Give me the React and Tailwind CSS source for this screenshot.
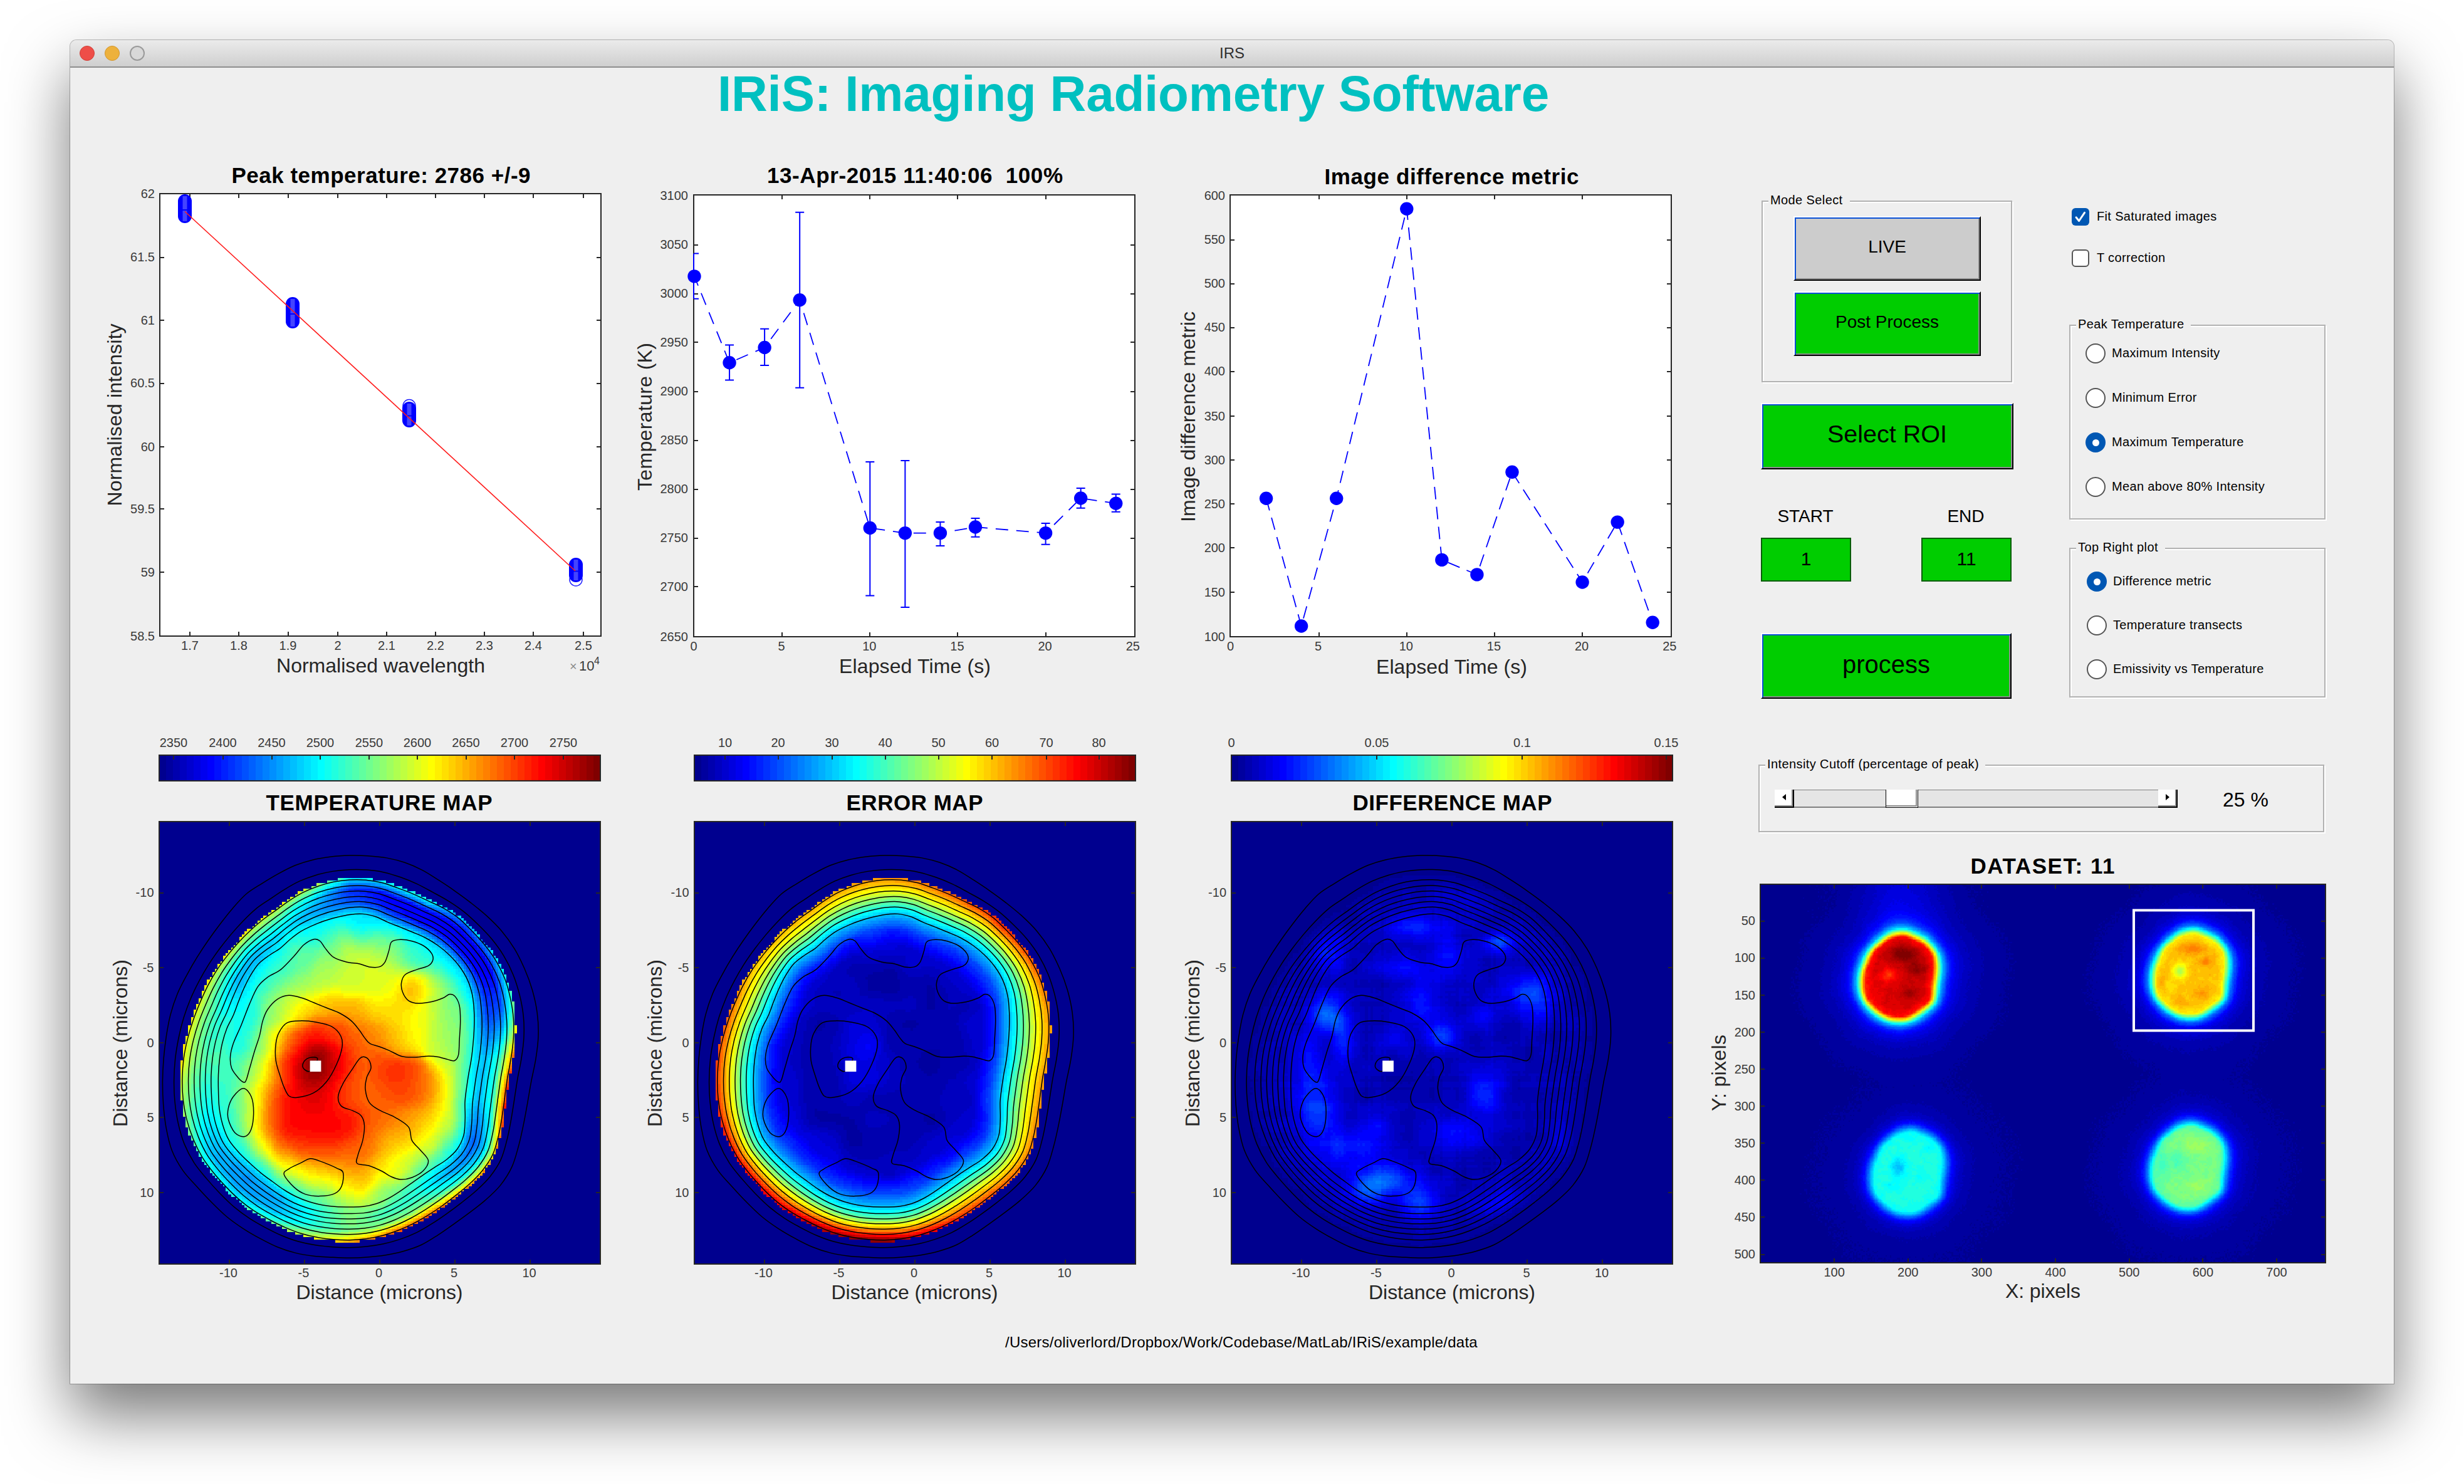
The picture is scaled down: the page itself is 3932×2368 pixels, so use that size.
import React from "react";

/* ---------- numeric helpers ---------- */

const clamp = (v, a, b) => Math.max(a, Math.min(b, v));
const smooth = (a, b, v) => {
  const t = clamp((v - a) / (b - a), 0, 1);
  return t * t * (3 - 2 * t);
};

// The 64 step "jet" colour map.
const JET = Array.from({ length: 64 }, (_, i) => {
  const v = (i + 1) / 64;
  const ch = (c) => Math.round(255 * clamp(1.5 - Math.abs(4 * v - c), 0, 1));
  return `rgb(${ch(3)},${ch(2)},${ch(1)})`;
});

const hash = (x, y) => {
  const s = Math.sin(x * 127.1 + y * 311.7) * 43758.5453;
  return s - Math.floor(s);
};
const valueNoise = (x, y) => {
  const xi = Math.floor(x);
  const yi = Math.floor(y);
  const fx = smooth(0, 1, x - xi);
  const fy = smooth(0, 1, y - yi);
  const a = hash(xi, yi) * (1 - fx) + hash(xi + 1, yi) * fx;
  const b = hash(xi, yi + 1) * (1 - fx) + hash(xi + 1, yi + 1) * fx;
  return a * (1 - fy) + b * fy - 0.5;
};

/* ---------- sample geometry ---------- */

const CX = 760;
const CY = 890;

const OUTER = [[790,355],[870,360],[960,383],[1040,425],[1110,467],[1180,515],[1245,575],[1290,645],[1320,715],[1337,800],[1330,880],[1310,960],[1295,1040],[1275,1120],[1255,1180],[1210,1235],[1140,1285],[1060,1335],[970,1385],[900,1402],[800,1413],[700,1412],[600,1403],[550,1390],[470,1355],[390,1310],[310,1240],[250,1185],[215,1130],[198,1060],[190,980],[192,900],[203,820],[222,745],[270,660],[320,590],[390,510],[430,465],[510,420],[600,378],[700,358]];
const EDGE = [[790,418],[850,424],[920,445],[1000,475],[1080,510],[1140,560],[1195,615],[1235,680],[1255,750],[1262,810],[1255,870],[1238,950],[1228,1020],[1215,1090],[1195,1150],[1150,1200],[1090,1245],[1020,1290],[940,1330],[860,1356],[780,1367],[700,1365],[610,1350],[530,1320],[450,1280],[370,1215],[310,1150],[275,1085],[255,1020],[249,950],[255,880],[275,810],[305,740],[345,670],[400,605],[460,550],[540,497],[610,455],[700,426]];
const INNER = [[790,507],[840,515],[880,533],[940,553],[1000,575],[1050,605],[1090,640],[1120,680],[1137,730],[1140,790],[1135,860],[1120,940],[1110,1000],[1112,1060],[1105,1110],[1065,1150],[1000,1185],[940,1222],[870,1262],[820,1278],[760,1280],[680,1276],[600,1255],[520,1210],[450,1160],[390,1105],[365,1040],[360,970],[365,880],[380,820],[410,770],[440,700],[480,640],[550,600],[600,560],[650,538],[720,518]];

// Radius of a closed outline for every whole degree around the centre.
function radialTable(points) {
  const polar = points
    .map(([x, y]) => [((Math.atan2(y - CY, x - CX) * 180) / Math.PI + 360) % 360, Math.hypot(x - CX, y - CY)])
    .sort((a, b) => a[0] - b[0]);
  const n = polar.length;
  const raw = Array.from({ length: 360 }, (_, d) => {
    let j = polar.findIndex((p) => p[0] > d);
    if (j < 0) j = 0;
    const b = polar[j];
    const a = polar[(j - 1 + n) % n];
    const span = (b[0] - a[0] + 360) % 360 || 360;
    const t = ((d - a[0] + 360) % 360) / span;
    return a[1] * (1 - t) + b[1] * t;
  });
  return raw.map((_, d) => {
    let s = 0;
    for (let k = -3; k <= 3; k++) s += raw[(d + k + 360) % 360];
    return s / 7;
  });
}
const R_OUT = radialTable(OUTER);
const R_EDGE = radialTable(EDGE);
const R_IN = radialTable(INNER);
const at = (table, deg) => {
  const n = table.length;
  const p = (deg / 360) * n;
  const i = Math.floor(p);
  const f = p - i;
  return table[i % n] * (1 - f) + table[(i + 1) % n] * f;
};

// v < 1 inside the plateau, 1..2 across the steep rim, > 2 outside it.
function rimCoord(x, y) {
  const deg = ((Math.atan2(y - CY, x - CX) * 180) / Math.PI + 360) % 360;
  const r = Math.hypot(x - CX, y - CY);
  const ri = at(R_IN, deg);
  const re = at(R_EDGE, deg);
  return { deg, v: r < ri ? r / ri : 1 + (r - ri) / (re - ri) };
}

function closedCurve(pts) {
  const n = pts.length;
  let d = `M${pts[0][0].toFixed(1)} ${pts[0][1].toFixed(1)}`;
  for (let i = 0; i < n; i++) {
    const p0 = pts[(i - 1 + n) % n];
    const p1 = pts[i];
    const p2 = pts[(i + 1) % n];
    const p3 = pts[(i + 2) % n];
    const c = [p1[0] + (p2[0] - p0[0]) / 6, p1[1] + (p2[1] - p0[1]) / 6, p2[0] - (p3[0] - p1[0]) / 6, p2[1] - (p3[1] - p1[1]) / 6, p2[0], p2[1]];
    d += `C${c.map((q) => q.toFixed(1)).join(" ")}`;
  }
  return d + "Z";
}

const ring = (fn) =>
  closedCurve(
    Array.from({ length: 60 }, (_, i) => {
      const deg = i * 6;
      const r = fn(deg);
      const a = (deg * Math.PI) / 180;
      return [CX + r * Math.cos(a), CY + r * Math.sin(a)];
    })
  );

const CONTOURS = [
  ring((d) => R_OUT[d]),
  ring((d) => R_OUT[d] * 0.42 + R_EDGE[d] * 0.58),
  ...[0, 0.17, 0.33, 0.49, 0.64, 0.8, 1].map((f) => ring((d) => R_EDGE[d] * (1 - f) + R_IN[d] * f)),
  ...[
    [[651,575],[670,580],[685,598],[710,622],[750,635],[790,640],[820,648],[850,648],[868,635],[880,605],[888,582],[915,576],[950,580],[985,592],[1010,612],[1014,630],[1000,645],[965,655],[930,668],[918,690],[922,715],[940,737],[970,744],[1010,740],[1045,730],[1065,720],[1082,726],[1095,750],[1098,790],[1095,840],[1092,880],[1080,895],[1060,892],[1030,885],[1000,883],[960,886],[920,884],[880,868],[850,858],[822,850],[806,835],[790,815],[765,790],[730,770],[690,756],[650,742],[615,730],[575,723],[540,733],[510,760],[495,790],[485,830],[470,870],[455,915],[445,945],[437,952],[420,940],[400,915],[396,885],[405,850],[430,800],[455,745],[480,700],[510,675],[550,655],[590,620],[620,590]],
    [[535,850],[545,820],[570,795],[610,790],[660,794],[705,805],[733,830],[737,860],[720,905],[690,950],[650,980],[600,992],[575,988],[560,965],[548,935],[535,895]],
    [[640,922],[622,918],[617,905],[630,890],[650,886],[662,892]],
    [[805,885],[820,895],[825,915],[812,940],[808,970],[820,1005],[850,1025],[900,1045],[940,1070],[950,1105],[975,1130],[1000,1158],[985,1185],[950,1203],[915,1208],[885,1200],[860,1187],[820,1172],[783,1166],[785,1145],[800,1105],[805,1065],[795,1040],[770,1027],[735,1015],[725,990],[740,955],[770,915],[790,890]],
    [[436,968],[460,990],[467,1030],[460,1075],[440,1095],[410,1085],[390,1050],[390,1020],[405,990]],
    [[640,1153],[670,1160],[720,1178],[740,1190],[736,1225],[715,1245],[670,1252],[625,1247],[590,1228],[560,1195],[575,1180],[610,1165]],
  ].map(closedCurve),
];

/* ---------- fields ---------- */

const T_POINTS = [[790,550,.36],[700,570,.42],[850,590,.42],[650,560,.38],[760,600,.56],[820,620,.58],[700,620,.52],[620,620,.46],[560,650,.42],[500,690,.4],[960,590,.4],[1000,620,.4],[900,620,.5],[950,620,.42],[1050,650,.4],[1090,700,.42],[850,630,.6],[900,680,.6],[840,700,.58],[760,680,.57],[680,680,.54],[600,700,.52],[540,730,.5],[950,705,.71],[1000,700,.6],[1040,720,.52],[1080,780,.48],[460,780,.38],[520,780,.5],[570,760,.6],[620,760,.65],[700,750,.68],[780,770,.69],[850,760,.65],[920,770,.64],[980,780,.6],[1040,800,.54],[1080,850,.5],[430,850,.38],[490,850,.5],[540,840,.66],[590,850,.81],[650,830,.84],[720,820,.81],[780,830,.78],[840,830,.73],[900,840,.68],[960,830,.62],[1030,870,.56],[400,920,.42],[450,920,.5],[500,920,.6],[550,920,.8],[600,910,.9],[655,890,1.02],[655,930,.99],[700,900,.93],[740,900,.85],[800,900,.77],[850,900,.8],[900,930,.84],[960,930,.8],[1010,950,.72],[1060,940,.6],[1100,930,.48],[390,1000,.42],[450,1000,.52],[490,990,.65],[530,1000,.82],[590,1000,.87],[650,980,.9],[700,980,.87],[750,980,.8],[800,980,.77],[860,980,.78],[920,970,.8],[980,980,.78],[1040,1000,.66],[1090,1000,.5],[400,1070,.42],[460,1070,.57],[510,1070,.76],[570,1070,.87],[640,1070,.87],[700,1080,.87],[760,1060,.86],[820,1060,.78],[880,1050,.76],[940,1060,.72],[1000,1050,.68],[1060,1060,.55],[430,1120,.42],[490,1130,.58],[550,1130,.77],[620,1130,.81],[690,1140,.8],[760,1140,.78],[820,1120,.76],[880,1110,.68],[940,1110,.66],[1000,1100,.6],[1060,1120,.46],[500,1180,.45],[560,1180,.58],[620,1190,.65],[680,1190,.66],[740,1190,.7],[800,1200,.72],[860,1180,.64],[920,1170,.58],[980,1160,.5],[600,1230,.46],[680,1240,.5],[740,1240,.58],[800,1240,.62],[860,1240,.5]];

// Rim temperature, one row per 15 degrees, columns at the knots below.
const RIM_KNOTS = [1, 1.35, 1.7, 2, 2.1];
const T_RIM = [
  [.36,.3,.42,.68,.88],[.4,.3,.4,.78,.95],[.3,.2,.32,.6,.86],[.37,.28,.38,.65,.85],[.42,.4,.48,.75,.88],[.5,.42,.5,.75,.85],
  [.5,.5,.48,.65,.75],[.41,.38,.4,.55,.65],[.35,.28,.3,.42,.55],[.33,.26,.27,.35,.45],[.37,.3,.3,.4,.45],[.4,.38,.43,.5,.58],
  [.45,.44,.5,.6,.7],[.4,.4,.48,.58,.7],[.31,.31,.42,.56,.7],[.31,.31,.42,.56,.7],[.38,.34,.42,.55,.74],[.34,.27,.34,.5,.67],
  [.34,.2,.16,.32,.45],[.31,.14,.11,.33,.45],[.32,.12,.11,.36,.45],[.28,.11,.09,.2,.45],[.28,.12,.09,.28,.45],[.33,.18,.2,.42,.56],
];
const T_RIM_COLS = RIM_KNOTS.map((_, k) => T_RIM.map((row) => row[k]));
const lerpKnots = (knots, vals, v) => {
  if (v <= knots[0]) return vals[0];
  for (let i = 1; i < knots.length; i++)
    if (v <= knots[i]) {
      const t = (v - knots[i - 1]) / (knots[i] - knots[i - 1]);
      return vals[i - 1] * (1 - t) + vals[i] * t;
    }
  return vals[vals.length - 1];
};

const EDGE_LIMIT = 2.05;

function temperature(x, y) {
  const { deg, v } = rimCoord(x, y);
  if (v > EDGE_LIMIT) return 0;
  const rim = lerpKnots(RIM_KNOTS, T_RIM_COLS.map((c) => at(c, deg)), v);
  const mix = smooth(0.86, 1.08, v);
  if (mix >= 1) return rim;
  let num = 0;
  let den = 1e-9;
  for (const [px, py, val] of T_POINTS) {
    const w = Math.exp(-((px - x) ** 2 + (py - y) ** 2) / 1700);
    num += w * val;
    den += w;
  }
  return (num / den) * (1 - mix) + rim * mix;
}

const E_EDGE = [.7,.72,.74,.78,.82,.9,.98,.97,.92,.87,.85,.82,.8,.75,.68,.68,.7,.7,.72,.74,.78,.83,.78,.72];

function errorField(x, y) {
  const { deg, v } = rimCoord(x, y);
  if (v > EDGE_LIMIT) return 0;
  const e = at(E_EDGE, deg);
  const base = lerpKnots([0, 0.6, 0.78, 0.9, 1, 1.35, 1.7, 2], [0.035, 0.04, 0.075, 0.17, 0.31, 0.46, 0.63 * (0.5 + e / 1.5), e], v);
  const g = 0.07 * Math.exp(-(((x - 690) / 80) ** 2) - ((y - 880) / 90) ** 2);
  return base + g + 0.035 * valueNoise(x / 60, y / 50) * (v < 0.9 ? 1 : 0);
}

const D_BLOBS = [[740,545,90,35,.1],[990,585,50,26,.14],[480,610,60,60,.08],[700,650,90,30,.08],[840,620,50,60,.08],[1100,730,55,55,.13],[1040,700,80,40,.06],[480,775,55,50,.17],[530,850,35,65,.1],[820,830,50,38,.13],[760,740,60,60,.08],[940,780,40,40,.07],[450,1020,65,90,.12],[950,985,55,60,.1],[860,1090,80,50,.09],[540,1130,110,45,.09],[650,1210,100,42,.15],[590,1245,70,35,.09],[760,1270,60,45,.12],[1010,1270,90,35,.08],[1190,1110,50,60,.05],[620,1080,70,50,.06],[900,460,60,40,.04],[680,840,50,40,.05],[420,900,50,80,.06]].map(([x, y, sx, sy, a]) => [(x - 195) * 1.0244 + 178, y, sx, sy, a]);

function difference(x, y) {
  const { v } = rimCoord(x, y);
  const inside = 1 - smooth(1.5, 2.4, v);
  let s = 0;
  for (const [bx, by, sx, sy, a] of D_BLOBS) s += a * Math.exp(-(((x - bx) / sx) ** 2) - ((y - by) / sy) ** 2);
  const n = valueNoise(x / 42, y / 38) * 0.035 + (hash(Math.round(x / 8), 3) - 0.5) * 0.012 + (hash(5, Math.round(y / 7)) - 0.5) * 0.012;
  return 0.01 + inside * (0.034 + s + n);
}

const SPOTS = [
  { x: 491, y: 644, peak: 0.895, mods: [[500,585,28,20,.09],[530,625,22,22,.07],[515,690,20,18,.05],[465,640,18,18,-.09],[430,670,30,50,-.02]] },
  { x: 1178, y: 636, peak: 0.665, mods: [[1180,570,28,14,.07],[1215,605,16,12,.06],[1152,630,16,20,-.14],[1205,690,16,16,.04],[1130,672,14,20,-.04],[1150,715,16,12,.03],[1105,660,12,24,.04]] },
  { x: 511, y: 1175, peak: 0.385, mods: [[487,1165,18,28,-.09],[510,1085,14,10,-.04],[540,1190,16,14,-.03],[555,1115,14,12,-.03],[470,1215,20,16,-.03]] },
  { x: 1173, y: 1160, peak: 0.475, mods: [[1145,1145,26,26,-.05],[1190,1105,30,20,.035],[1195,1215,26,20,.03],[1110,1165,16,50,-.04]] },
];
const KX = 0.203;
const KY = 0.279;
function dataset(x, y) {
  let s = 0.012;
  for (const p of SPOTS) {
    const { v } = rimCoord(CX + (x - p.x) / KX, CY + (y - p.y) / KY);
    if (v > 9) continue;
    const prof = lerpKnots([0.8, 1, 1.3, 1.6, 2, 2.6, 3.2, 4.2, 6, 9], [1, 0.94, 0.75, 0.54, 0.31, 0.15, 0.09, 0.045, 0.018, 0], v);
    let m = 0;
    if (v < 1.3) for (const [mx, my, sx, sy, a] of p.mods) m += a * Math.exp(-(((x - mx) / sx) ** 2) - ((y - my) / sy) ** 2);
    s += p.peak * prof + m * (1 - smooth(1, 1.3, v));
    if (v < 1) s += valueNoise(x / 9, y / 10) * 0.025;
  }
  s += 0.055 * Math.exp(-(((x - 490) / 95) ** 2) - ((y - 395) / 150) ** 2);
  return s + (hash(x, y) - 0.5) * 0.007;
}

// Groups equal neighbouring cells into one path per colour step.
function buildMap(field, cols, rows, toX, toY, w, h) {
  const paths = Array(64).fill("");
  const cw = w / cols;
  const ch = h / rows;
  for (let j = 0; j < rows; j++) {
    let start = 0;
    let prev = -1;
    for (let i = 0; i <= cols; i++) {
      const q = i < cols ? clamp(Math.floor(field(toX((i + 0.5) / cols), toY((j + 0.5) / rows)) * 64), 0, 63) : -2;
      if (q !== prev) {
        if (prev > 0) paths[prev] += `M${(start * cw).toFixed(2)} ${(j * ch).toFixed(2)}h${((i - start) * cw).toFixed(2)}v${ch.toFixed(2)}h-${((i - start) * cw).toFixed(2)}z`;
        prev = q;
        start = i;
      }
    }
  }
  return paths;
}
const mapOf = (f) => buildMap(f, 165, 165, (u) => 178 + u * 1346, (u) => 265 + u * 1166, 704, 706);
const TEMP_MAP = mapOf(temperature);
const ERROR_MAP = mapOf(errorField);
const DIFF_MAP = mapOf(difference);
const DATA_MAP = buildMap(dataset, 384, 256, (u) => 161 + u * 1335, (u) => 393 + u * 1029, 902, 604);

/* ---------- chart pieces ---------- */

const INK = "#262626";
const SANS = "font-['Liberation_Sans',Arial,sans-serif]";

function Txt({ x, y, size, w, bold, anchor = "middle", fill = INK, children, ...rest }) {
  return (
    <text x={x} y={y} fontSize={size} fontWeight={bold ? 700 : 400} textAnchor={anchor} fill={fill} textLength={w} xmlSpace="preserve" {...rest}>
      {children}
    </text>
  );
}
function YLabel({ x, y, w, children }) {
  return (
    <Txt x={x} y={y} size={32} w={w} transform={`rotate(-90 ${x} ${y})`}>
      {children}
    </Txt>
  );
}
function Frame({ x, y, w, h, xs = [], ys = [], fill = "none" }) {
  const t = 7;
  return (
    <g stroke={INK} strokeWidth="2" fill="none" shapeRendering="crispEdges">
      <rect x={x} y={y} width={w} height={h} fill={fill} />
      {xs.map((v) => (
        <path key={"x" + v} d={`M${v} ${y}v${t}M${v} ${y + h}v${-t}`} />
      ))}
      {ys.map((v) => (
        <path key={"y" + v} d={`M${x} ${v}h${t}M${x + w} ${v}h${-t}`} />
      ))}
    </g>
  );
}
function TickLabels({ xs = [], ys = [], xBase, yRight }) {
  return (
    <g>
      {xs.map(([p, l]) => (
        <Txt key={"x" + l} x={p} y={xBase} size={20} fill="#3a3a3a">{l}</Txt>
      ))}
      {ys.map(([p, l]) => (
        <Txt key={"y" + l} x={yRight} y={p + 6.5} size={20} anchor="end" fill="#3a3a3a">{l}</Txt>
      ))}
    </g>
  );
}
const Cells = ({ paths }) => (
  <g shapeRendering="crispEdges">
    {paths.map((d, i) => (d ? <path key={i} d={d} fill={JET[i]} /> : null))}
  </g>
);

/* ---------- top row plots ---------- */

function FitPlot() {
  const xs = [303, 381, 459.5, 539, 617, 695, 773, 851, 931];
  const xl = ["1.7", "1.8", "1.9", "2", "2.1", "2.2", "2.3", "2.4", "2.5"];
  const ys = [309, 410.5, 511, 611.5, 713, 812, 913, 1015];
  const yl = ["62", "61.5", "61", "60.5", "60", "59.5", "59", "58.5"];
  const stacks = [[295, 321, 345], [467, 485, 513], [653, 652, 671], [919, 901, 918]];
  return (
    <svg viewBox="112 230 868 900" className={`w-[868px] h-[900px] ${SANS}`}>
      <Txt x={608} y={291.5} size={35} w={477} bold fill="#000">Peak temperature: 2786 +/-9</Txt>
      <Frame x={255} y={308.5} w={704} h={706.5} xs={xs} ys={ys.slice(1, -1)} fill="#fff" />
      <TickLabels xs={xs.map((p, i) => [p, xl[i]])} ys={ys.map((p, i) => [p, yl[i]])} xBase={1036.5} yRight={247} />
      <g fill="none" stroke="#2020ff" strokeWidth="1.5">
        <circle cx="653" cy="647.5" r="10" />
        <circle cx="919" cy="925" r="10" />
      </g>
      {stacks.map(([x, a, b]) => (
        <g key={x}>
          <line x1={x} x2={x} y1={a} y2={b} stroke="#0000ff" strokeWidth="22" strokeLinecap="round" />
          <line x1={x} x2={x} y1={a - 8} y2={b + 8} stroke="#4444ff" strokeWidth="7" />
          <path d={`M${x - 5} ${(a + b) / 2 + 2}h10`} stroke="#0000ff" strokeWidth="2" />
        </g>
      ))}
      <line x1="295" y1="337.5" x2="918" y2="911" stroke="#ff1a1a" strokeWidth="1.6" />
      <Txt x={607.5} y={1072.5} size={32} w={333}>Normalised wavelength</Txt>
      <YLabel x={194} y={662} w={291}>Normalised intensity</YLabel>
      <text x="909" y="1070" fontSize="20" fill="#8a8a8a">×</text>
      <text x="924" y="1070" fontSize="22" fill="#3a3a3a">10</text>
      <text x="948" y="1060" fontSize="16" fill="#3a3a3a">4</text>
    </svg>
  );
}

function ElapsedPlot() {
  const X = (v) => 1108 + 28.03 * v;
  const xs = [0, 5, 10, 15, 20, 25];
  const ys = [312, 390.9, 468.6, 546.4, 624.8, 702.6, 780.6, 858.6, 936.4, 1016];
  const data = [[0,440.9,404.4,476.7],[2,578.8,550.4,606.5],[4,554.5,524.7,582.9],[6,478.7,338.8,618.7],[10,842.5,737,950.6],[12,850.6,735,968.9],[14,850.6,833,870.9],[16,841,827,856.7],[20,850.6,835,868.8],[22,795,779,810.7],[24,803.3,788.4,816.8]];
  return (
    <svg viewBox="980 230 860 900" className={`w-[860px] h-[900px] ${SANS}`}>
      <Txt x={1460} y={291.5} size={35} w={472} bold fill="#000">{"13-Apr-2015 11:40:06\u00a0 100%"}</Txt>
      <Frame x={1107} y={311} w={703.5} h={705} xs={xs.slice(1, -1).map(X)} ys={ys.slice(1, -1)} fill="#fff" />
      <TickLabels xs={xs.map((v) => [X(v) - 1, v])} ys={ys.map((p, i) => [p, 3100 - i * 50])} xBase={1038} yRight={1098} />
      <polyline points={data.map((d) => `${X(d[0])},${d[1]}`).join(" ")} fill="none" stroke="#0000ff" strokeWidth="1.8" strokeDasharray="20 13" strokeDashoffset="4" />
      <g stroke="#0000ff" strokeWidth="2">
        {data.map(([v, , a, b]) => (
          <path key={v} d={v ? `M${X(v)} ${a}V${b}M${X(v) - 7} ${a}h14M${X(v) - 7} ${b}h14` : `M${X(v) - 1} ${a}V${b}M${X(v)} ${a}h7M${X(v)} ${b}h7`} />
        ))}
      </g>
      {data.map(([v, y]) => (
        <circle key={v} cx={X(v)} cy={y} r="10.7" fill="#0000ff" />
      ))}
      <Txt x={1460} y={1074} size={32} w={242}>Elapsed Time (s)</Txt>
      <YLabel x={1040} y={665} w={236}>Temperature (K)</YLabel>
    </svg>
  );
}

function MetricPlot() {
  const X = (v) => 1964.5 + 28.03 * v;
  const xs = [0, 5, 10, 15, 20, 25];
  const ys = [312, 382.5, 452.6, 522.6, 592.6, 664.4, 734.4, 804.4, 874.4, 945, 1016];
  const data = [[2,795.2],[4,999],[6,795.2],[10,333.2],[12,893.4],[14,916.9],[16,753.3],[20,929],[22,833.1],[24,993.2]];
  return (
    <svg viewBox="1840 230 870 900" className={`w-[870px] h-[900px] ${SANS}`}>
      <Txt x={2316.5} y={293.6} size={35} w={406} bold fill="#000">Image difference metric</Txt>
      <Frame x={1963} y={311} w={704} h={705} xs={xs.slice(1, -1).map(X)} ys={ys.slice(1, -1)} fill="#fff" />
      <TickLabels xs={xs.map((v) => [X(v) - 1, v])} ys={ys.map((p, i) => [p, 600 - i * 50])} xBase={1038} yRight={1955} />
      <polyline points={data.map((d) => `${X(d[0])},${d[1]}`).join(" ")} fill="none" stroke="#0000ff" strokeWidth="1.8" strokeDasharray="20 12" />
      {data.map(([v, y]) => (
        <circle key={v} cx={X(v)} cy={y} r="10.7" fill="#0000ff" />
      ))}
      <Txt x={2316.5} y={1074.5} size={32} w={241}>Elapsed Time (s)</Txt>
      <YLabel x={1907.4} y={665} w={336}>Image difference metric</YLabel>
    </svg>
  );
}

/* ---------- bottom row maps ---------- */

function ColorBar({ ticks, w }) {
  return (
    <g>
      {JET.map((c, i) => (
        <rect key={i} x={(i * w) / 64} y={1205} width={w / 64 + 0.6} height={41} fill={c} shapeRendering="crispEdges" />
      ))}
      <g stroke={INK} strokeWidth="2" fill="none" shapeRendering="crispEdges">
        <rect x={0} y={1205} width={w} height={41} />
        {ticks.map(([p]) => (
          <path key={p} d={`M${p} 1205v7`} />
        ))}
      </g>
      {ticks.map(([p, l]) => (
        <Txt key={l} x={p} y={1191.5} size={20} fill="#3a3a3a">{l}</Txt>
      ))}
    </g>
  );
}

// `left` is where the axes start inside the drawing, in its own pixels.
function MapPlot({ left, width, className, title, titleW, titleX, paths, ticks, yLabelX }) {
  const w = 704;
  const xs = [112, 232, 352, 472, 592];
  const ys = [1424.5, 1544.4, 1664.4, 1783, 1903];
  const names = ["-10", "-5", "0", "5", "10"];
  return (
    <svg viewBox={`${-left} 1130 ${width} 970`} className={`${className} ${SANS}`}>
      <ColorBar ticks={ticks} w={w} />
      <Txt x={titleX} y={1293.4} size={35} w={titleW} bold fill="#000">{title}</Txt>
      <rect x={0} y={1311} width={w} height={706} fill={JET[0]} />
      <g transform="translate(0 1311)">
        <Cells paths={paths} />
        <g transform="scale(0.52303 0.60549) translate(-178 -265)" fill="none" stroke="#000" strokeWidth="1.5">
          {CONTOURS.map((d, i) => (
            <path key={i} d={d} vectorEffect="non-scaling-stroke" />
          ))}
          <rect x="639" y="895" width="34" height="29" fill="#fff" stroke="none" />
        </g>
      </g>
      <Frame x={0} y={1311} w={w} h={706} xs={xs} ys={ys} />
      <TickLabels xs={xs.map((p, i) => [p - 1, names[i]])} ys={ys.map((p, i) => [p, names[i]])} xBase={2038} yRight={-8} />
      <Txt x={352} y={2072.5} size={32} w={266}>Distance (microns)</Txt>
      <YLabel x={yLabelX} y={1664.5} w={267}>Distance (microns)</YLabel>
    </svg>
  );
}

function DatasetPlot() {
  const xs = [1, 2, 3, 4, 5, 6, 7].map((k) => [2809.5 + k * 117.65, k * 100]);
  const ys = Array.from({ length: 10 }, (_, k) => [1469.9 + k * 59.07, 50 + k * 50]);
  return (
    <svg viewBox="2710 1328 1110 772" className={`w-[1110px] h-[772px] ${SANS}`}>
      <Txt x={3259.5} y={1394} size={35} w={230} bold fill="#000">DATASET: 11</Txt>
      <rect x={2809} y={1410.5} width={902} height={604} fill={JET[0]} />
      <g transform="translate(2809 1410.5)">
        <Cells paths={DATA_MAP} />
      </g>
      <rect x={3405} y={1452.5} width={191} height={192} fill="none" stroke="#fff" strokeWidth="4" />
      <Frame x={2809} y={1411} w={902} h={603.5} xs={xs.map((t) => t[0])} ys={ys.map((t) => t[0])} />
      <TickLabels xs={xs} ys={ys} xBase={2037} yRight={2801} />
      <Txt x={3260} y={2071} size={32} w={120}>X: pixels</Txt>
      <YLabel x={2754} y={1712} w={122}>Y: pixels</YLabel>
    </svg>
  );
}

/* ---------- controls ---------- */

function Panel({ title, className, gap, children }) {
  return (
    <div className={`relative border-2 border-[#b2b2b2] shadow-[2px_2px_0_#fff,inset_2px_2px_0_#fff] ${className}`}>
      <span className={`absolute -top-[16px] left-[9px] pl-[3px] bg-[#efefef] h-[26px] leading-[26px] text-[20px] whitespace-nowrap tracking-[0.4px] ${gap}`}>{title}</span>
      {children}
    </div>
  );
}

function PushButton({ className, children }) {
  return (
    <button className={`flex items-center justify-center pb-[6px] border-2 border-t-white border-l-white border-r-black border-b-black shadow-[inset_2px_2px_0_#0a50d6,inset_-2px_-2px_0_#8c8c8c] ${className}`}>
      {children}
    </button>
  );
}

function Check({ checked, children }) {
  return (
    <label className="flex items-center gap-[12px] h-[28px] text-[20px] tracking-[0.35px]">
      <span className={`flex items-center justify-center size-[28px] rounded-[6px] ${checked ? "bg-[#0057b3]" : "bg-white border-2 border-[#555]"}`}>
        {checked && (
          <svg viewBox="0 0 28 28" className="size-[28px]" fill="none" stroke="#fff" strokeWidth="3" strokeLinecap="round" strokeLinejoin="round">
            <path d="M7 14.8 11.6 20.5 20.5 7.3" />
          </svg>
        )}
      </span>
      <span className="-mt-[2px]">{children}</span>
    </label>
  );
}

function Radio({ checked, children }) {
  return (
    <label className="flex items-center gap-[10px] h-[32px] text-[20px] tracking-[0.35px] whitespace-nowrap">
      <span className={`flex items-center justify-center size-[32px] rounded-full ${checked ? "bg-[#0057b3]" : "bg-white border-2 border-[#555]"}`}>
        {checked && <span className="size-[11px] rounded-full bg-white" />}
      </span>
      <span className="-mt-[2px]">{children}</span>
    </label>
  );
}

function Controls() {
  return (
    <div className="flex h-[1112px]">
      <div className="ml-[101px] w-[403px] pt-[212px] flex flex-col">
        <Panel title="Mode Select" gap="pr-[11px]" className="w-[400px] h-[290px] pl-[49px] pt-[23px] flex flex-col gap-[17px]">
          <PushButton className="w-[299px] h-[103px] bg-[#cccccc] text-[28px]">LIVE</PushButton>
          <PushButton className="w-[299px] h-[103px] bg-[#00cd00] text-[28px]">Post Process</PushButton>
        </Panel>
        <PushButton className="w-[403px] h-[106px] mt-[33px] -ml-px bg-[#00cd00] text-[39.5px]">Select ROI</PushButton>
        <div className="w-[400px] mt-[57px] -ml-[2px] flex justify-between text-[28px] leading-[36px]">
          <span className="w-[144px] text-center">START</span>
          <span className="w-[144px] text-center">END</span>
        </div>
        <div className="w-[400px] mt-[16px] -ml-px flex justify-between text-[30px]">
          <div className="w-[144px] h-[70px] pb-[4px] border-2 border-[#0a5c0a] bg-[#00cd00] flex items-center justify-center">1</div>
          <div className="w-[144px] h-[70px] pb-[4px] border-2 border-[#0a5c0a] bg-[#00cd00] flex items-center justify-center">11</div>
        </div>
        <PushButton className="w-[400px] h-[105px] mt-[82px] -ml-px bg-[#00cd00] text-[40px]">process</PushButton>
      </div>
      <div className="ml-[88px] w-[409px] pt-[224px] flex flex-col">
        <div className="pl-[4px] flex flex-col gap-[38px]">
          <Check checked>Fit Saturated images</Check>
          <Check>T correction</Check>
        </div>
        <Panel title="Peak Temperature" gap="pr-[11px]" className="mt-[92px] h-[311px] pl-[24px] pt-[28px] flex flex-col gap-[39px]">
          <Radio>Maximum Intensity</Radio>
          <Radio>Minimum Error</Radio>
          <Radio checked>Maximum Temperature</Radio>
          <Radio>Mean above 80% Intensity</Radio>
        </Panel>
        <Panel title="Top Right plot" gap="pr-[11px]" className="mt-[45px] h-[239px] pl-[26px] pt-[36px] flex flex-col gap-[38px]">
          <Radio checked>Difference metric</Radio>
          <Radio>Temperature transects</Radio>
          <Radio>Emissivity vs Temperature</Radio>
        </Panel>
      </div>
    </div>
  );
}

function SliderPanel() {
  return (
    <Panel title="Intensity Cutoff (percentage of peak)" gap="pr-[10px]" className="ml-[96px] w-[903px] h-[108px] pl-[24px] pt-[38px] flex items-start">
      <div className="flex w-[643px] h-[29px]">
        <div className="w-[31px] h-[29px] bg-white border-r-2 border-b-2 border-black shadow-[inset_-2px_-2px_0_#8c8c8c] flex items-center justify-center">
          <svg viewBox="0 0 6 10" className="w-[6px] h-[10px] -mt-[3px]"><path d="M6 0v10L0 5z" /></svg>
        </div>
        <div className="w-[146px] bg-[#e5e5e5] border-t border-b-2 border-[#808080]" />
        <div className="w-[52px] bg-white border-x border-b border-black shadow-[inset_-1px_-1px_0_#fff,inset_-3px_-3px_0_#8c8c8c]" />
        <div className="flex-1 bg-[#e5e5e5] border-t border-b-2 border-[#808080]" />
        <div className="w-[31px] h-[29px] bg-white border-r-2 border-b-2 border-black shadow-[inset_-2px_-2px_0_#8c8c8c] flex items-center justify-center">
          <svg viewBox="0 0 6 10" className="w-[6px] h-[10px] -mt-[3px]"><path d="M0 0v10l6-5z" /></svg>
        </div>
      </div>
      <span className="ml-[72px] text-[32px] leading-[32px]">25 %</span>
    </Panel>
  );
}

/* ---------- window ---------- */

export default function App() {
  return (
    <div className={`w-[3932px] h-[2368px] overflow-hidden bg-white pt-[64px] pl-[112px] text-black ${SANS}`}>
      <div className="w-[3708px] h-[2144px] flex flex-col rounded-t-[10px] bg-[#efefef] shadow-[0_0_0_1px_rgba(0,0,0,0.25),0_50px_100px_rgba(0,0,0,0.53)]">
        <header className="h-[44px] rounded-t-[10px] grid grid-cols-3 items-center border-b-2 border-[#8e8e8e] bg-linear-to-b from-[#ebebeb] to-[#cfcfcf]">
          <div className="flex items-center gap-[16px] pl-[15px]">
            <span className="size-[24px] rounded-full bg-[#ee4e48] border border-[#d03f38]" />
            <span className="size-[24px] rounded-full bg-[#edb13c] border border-[#d2972f]" />
            <span className="size-[24px] rounded-full bg-[#d8d8d8] border-2 border-[#9a9a9a]" />
          </div>
          <span className="text-center text-[24px] text-[#2f2f2f]">IRS</span>
        </header>
        <div className="flex h-[1992px]">
          <div className="w-[2598px] flex flex-col">
            <h1 className="h-[122px] pl-[1033px] leading-[83px] text-[80px] tracking-[-0.2px] font-bold text-[#00c0c0] whitespace-nowrap">IRiS: Imaging Radiometry Software</h1>
            <div className="flex">
              <FitPlot />
              <ElapsedPlot />
              <MetricPlot />
            </div>
            <div className="flex">
              <MapPlot left={141.5} width={868} className="w-[868px] h-[970px]" title="TEMPERATURE MAP" titleX={351.5} titleW={361} paths={TEMP_MAP} yLabelX={-51}
                ticks={[[23.5, "2350"], [102, "2400"], [180, "2450"], [257.5, "2500"], [335.5, "2550"], [412.5, "2600"], [490, "2650"], [567.5, "2700"], [645.5, "2750"]]} />
              <MapPlot left={127.5} width={860} className="w-[860px] h-[970px]" title="ERROR MAP" titleX={352} titleW={218} paths={ERROR_MAP} yLabelX={-51.5}
                ticks={[[49.5, "10"], [134, "20"], [220, "30"], [305, "40"], [390, "50"], [475.5, "60"], [562, "70"], [646, "80"]]} />
              <MapPlot left={125} width={870} className="w-[870px] h-[970px]" title="DIFFERENCE MAP" titleX={352.5} titleW={318} paths={DIFF_MAP} yLabelX={-51}
                ticks={[[0, "0"], [232, "0.05"], [464, "0.1"], [694, "0.15"]]} />
            </div>
          </div>
          <div className="w-[1110px] flex flex-col">
            <Controls />
            <SliderPanel />
            <DatasetPlot />
          </div>
        </div>
        <footer className="h-[108px] pl-[1492px] text-[24px] leading-[83px] tracking-[0.24px] whitespace-nowrap">/Users/oliverlord/Dropbox/Work/Codebase/MatLab/IRiS/example/data</footer>
      </div>
    </div>
  );
}
